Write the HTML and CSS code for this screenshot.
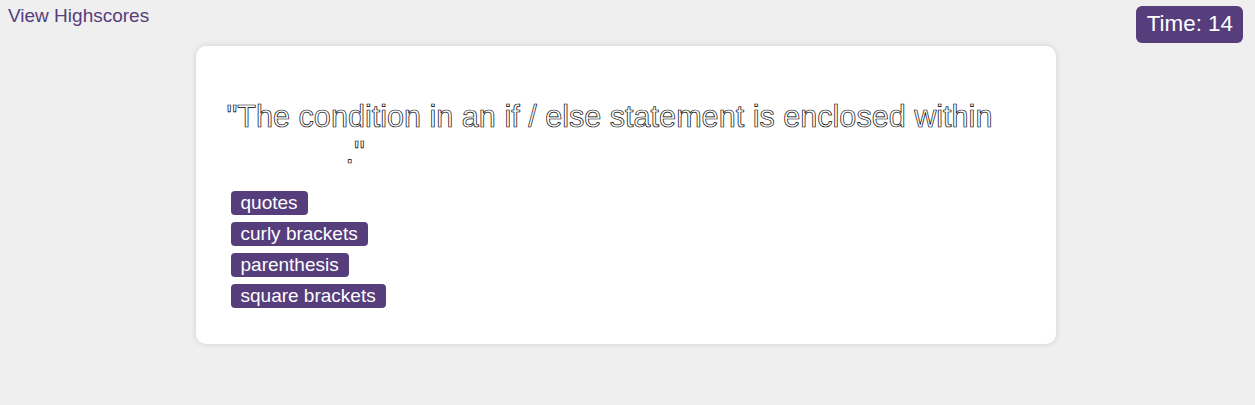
FILE: index.html
```html
<!DOCTYPE html>
<html lang="en">
<head>
<meta charset="utf-8">
<title>Code Quiz</title>
<link rel="stylesheet" href="styles.css">
</head>
<body>
<header class="top-bar">
  <a class="highscores-link" href="#">View Highscores</a>
  <div class="timer">Time: 14</div>
</header>
<main class="card">
  <h2 class="question">"The condition in an if / else statement is enclosed within <span class="blank">_______</span>."</h2>
  <div class="choices">
    <button class="choice">quotes</button>
    <button class="choice">curly brackets</button>
    <button class="choice">parenthesis</button>
    <button class="choice">square brackets</button>
  </div>
</main>
</body>
</html>
```
FILE: styles.css
```css
html, body {
  margin: 0;
  padding: 0;
}
body {
  background: #efefef;
  font-family: "Liberation Sans", Arial, sans-serif;
  height: 405px;
}
.top-bar {
  display: flex;
  justify-content: space-between;
  align-items: flex-start;
  padding: 5px 12px 0 8px;
  height: 41px;
}
.highscores-link {
  color: #563d7c;
  text-decoration: none;
  font-size: 19px;
  line-height: 22px;
}
.timer {
  margin-top: 1px;
  background: #563d7c;
  color: #fff;
  font-size: 22.4px;
  line-height: 26px;
  padding: 5px 10px 6px 11px;
  border-radius: 6px;
}
.card {
  width: 860px;
  box-sizing: border-box;
  margin: 0 auto;
  position: relative;
  left: -2px;
  background: #fff;
  border-radius: 10px;
  box-shadow: 0 0 6px rgba(0, 0, 0, 0.13);
  padding: 52px 40px 36px 31px;
}
.question {
  margin: 0 0 21px 0;
  font-size: 30.6px;
  font-weight: normal;
  line-height: 36px;
  color: #fff;
  -webkit-text-stroke: 0.7px #000;
}
.blank {
  -webkit-text-stroke: 0;
  color: #fff;
}
.choices {
  display: flex;
  flex-direction: column;
  align-items: flex-start;
  gap: 7px;
  padding-left: 4px;
}
.choice {
  background: #563d7c;
  color: #fff;
  border: none;
  border-radius: 4px;
  font-family: "Liberation Sans", Arial, sans-serif;
  font-size: 19px;
  line-height: 22px;
  padding: 1px 10px;
  margin: 0;
  cursor: pointer;
}
```
